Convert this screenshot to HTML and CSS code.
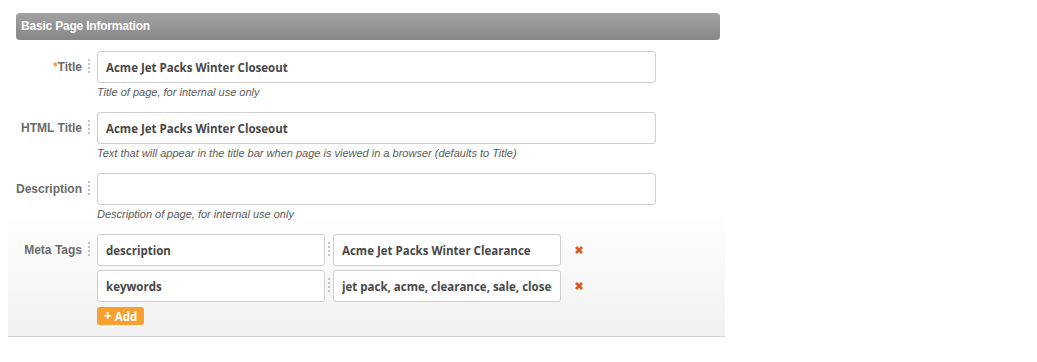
FILE: index.html
```html
<!DOCTYPE html>
<html>
<head>
<meta charset="utf-8">
<link rel="stylesheet" href="styles.css">
</head>
<body>
<div class="panel">
  <div class="panel-head">Basic Page Information</div>
  <div class="form">
    <div class="row">
      <label class="lbl"><span class="req">*</span>Title</label>
      <span class="sep"></span>
      <div class="field">
        <input class="input" type="text" value="Acme Jet Packs Winter Closeout" readonly>
        <div class="help">Title of page, for internal use only</div>
      </div>
    </div>
    <div class="row">
      <label class="lbl">HTML Title</label>
      <span class="sep"></span>
      <div class="field">
        <input class="input" type="text" value="Acme Jet Packs Winter Closeout" readonly>
        <div class="help">Text that will appear in the title bar when page is viewed in a browser (defaults to Title)</div>
      </div>
    </div>
    <div class="row">
      <label class="lbl">Description</label>
      <span class="sep"></span>
      <div class="field">
        <input class="input" type="text" value="" readonly>
        <div class="help">Description of page, for internal use only</div>
      </div>
    </div>
    <div class="row meta">
      <label class="lbl">Meta Tags</label>
      <span class="sep"></span>
      <div class="field">
        <div class="pair">
          <input class="input small" type="text" value="description" readonly>
          <span class="sep"></span>
          <input class="input small" type="text" value="Acme Jet Packs Winter Clearance" readonly>
          <svg class="del" width="10" height="10" viewBox="0 0 10 10"><path d="M2 2L8 8M8 2L2 8" stroke="#d9581f" stroke-width="2.6"/></svg>
        </div>
        <div class="pair">
          <input class="input small" type="text" value="keywords" readonly>
          <span class="sep"></span>
          <input class="input small" type="text" value="jet pack, acme, clearance, sale, closeout" readonly>
          <svg class="del" width="10" height="10" viewBox="0 0 10 10"><path d="M2 2L8 8M8 2L2 8" stroke="#d9581f" stroke-width="2.6"/></svg>
        </div>
        <button class="add"><span class="plus">+</span> Add</button>
      </div>
    </div>
  </div>
</div>
</body>
</html>
```
FILE: styles.css
```css
body {
  margin: 0;
  background: #fff;
  font-family: "Liberation Sans", Arial, sans-serif;
}
.panel {
  margin-left: 8px;
  width: 704px;
  padding: 13px 5px 11px 8px;
  border-bottom: 1px solid #d0d0d0;
  background: linear-gradient(to bottom, #ffffff 0%, #ffffff 62%, #f1f1f1 100%);
}
.panel-head {
  height: 27px;
  line-height: 26px;
  padding-left: 5px;
  border-radius: 4px;
  background: linear-gradient(to bottom, #a2a2a2, #878787);
  color: #fff;
  font-weight: bold;
  font-size: 12px;
  letter-spacing: -0.2px;
}
.form {
  padding-top: 11px;
}
.row {
  display: flex;
  align-items: flex-start;
  margin-bottom: 13px;
}
.row.meta {
  margin-bottom: 0;
}
.lbl {
  width: 66px;
  flex: none;
  text-align: right;
  line-height: 32px;
  font-size: 12px;
  font-weight: bold;
  color: #6b6b6b;
  white-space: nowrap;
}
.req {
  color: #f0a030;
}
.sep {
  width: 2px;
  height: 16px;
  margin: 8px 7px 0 6px;
  background: repeating-linear-gradient(to bottom, #c4c4c4 0 2px, transparent 2px 4px);
  flex: none;
}
.field {
  display: flex;
  flex-direction: column;
  align-items: flex-start;
}
.input {
  display: block;
  box-sizing: border-box;
  width: 559px;
  height: 32px;
  margin: 0;
  border: 1px solid #cfcfcf;
  border-radius: 3px;
  background: #fff;
  padding: 0 8px;
  font-family: "Open Sans", sans-serif;
  font-weight: 700;
  font-size: 11.5px;
  color: #474747;
  outline: none;
}
.input.small {
  width: 228px;
}
.help {
  margin-top: 2px;
  font-size: 11px;
  line-height: 14px;
  font-style: italic;
  color: #5a5a5a;
}
.pair {
  display: flex;
  align-items: center;
  margin-bottom: 4px;
}
.pair .sep {
  margin: 0 3px;
}
.del {
  margin-left: 13px;
}
.add {
  margin-top: 1px;
  height: 18px;
  width: 47px;
  padding: 0;
  border: none;
  border-radius: 3px;
  background: #f7a030;
  color: #fff;
  font-family: "Open Sans", sans-serif;
  font-weight: 700;
  font-size: 11.5px;
  line-height: 18px;
}
.plus {
  font-size: 14px;
}
```
